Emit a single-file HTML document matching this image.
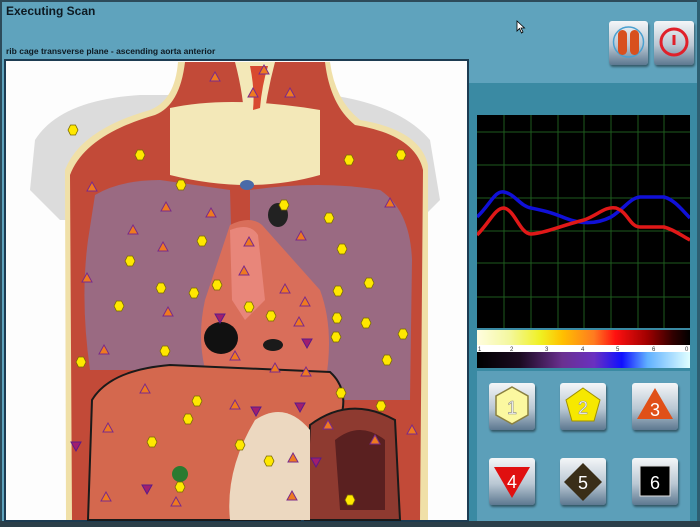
<!DOCTYPE html>
<html><head><style>
*{margin:0;padding:0;box-sizing:border-box}
body{width:700px;height:527px;overflow:hidden;background:#5fa3bd;font-family:"Liberation Sans",sans-serif;position:relative}
.t{position:absolute;font-weight:bold;color:#0d1a22}
.btn{position:absolute;border-radius:3px;background:linear-gradient(#f4f6f8,#b9c7d3 55%,#5d7890);box-shadow:1px 2px 2px rgba(0,0,0,.45)}
</style></head><body>
<div style="position:absolute;left:0;top:0;width:700px;height:2px;background:#2d4b5a"></div>
<div style="position:absolute;left:0;top:0;width:2px;height:527px;background:#2d4b5a"></div>
<div style="position:absolute;right:0;top:0;width:3px;height:527px;background:#2d5f72"></div>
<div style="position:absolute;left:0;top:521px;width:700px;height:6px;background:#2b3f49"></div>
<div class="t" style="left:6px;top:4px;font-size:12px">Executing Scan</div>
<div class="t" style="left:6px;top:46px;font-size:8.5px">rib cage transverse plane - ascending aorta anterior</div>
<div style="position:absolute;left:468px;top:83px;width:229px;height:438px;background:#3a8aa3"></div>
<div class="btn" style="left:609px;top:21px;width:39px;height:44px">
<svg width="39" height="44"><circle cx="19.5" cy="21" r="15" fill="none" stroke="#4aa0d0" stroke-width="1.5"/><rect x="9" y="9" width="9" height="25" rx="4.5" fill="#d8501e"/><rect x="21" y="9" width="9" height="25" rx="4.5" fill="#d8501e"/></svg></div>
<div class="btn" style="left:654px;top:21px;width:40px;height:44px">
<svg width="40" height="44"><circle cx="20" cy="21" r="13" fill="none" stroke="#e0202a" stroke-width="3"/><rect x="18.5" y="14" width="3" height="10" fill="#e0202a"/></svg></div>
<svg style="position:absolute;left:516px;top:20px" width="10" height="14"><path d="M1 1 L1 11 L3.5 8.5 L5.5 13 L7 12 L5 8 L8.5 8 Z" fill="#fff" stroke="#000" stroke-width=".8"/></svg>

<!-- image panel -->
<svg style="position:absolute;left:4px;top:59px" width="465" height="463" viewBox="4 59 465 463">
<rect x="4" y="59" width="465" height="463" fill="#1d3c52"/>
<rect x="6" y="61" width="461" height="459" fill="#fdfdfd"/>
<path d="M35 140 Q60 100 140 95 L330 95 Q400 105 430 140 L440 200 L420 220 L60 220 L30 190 Z" fill="#dcdcdc"/>
<path d="M65 170 Q80 130 150 110 Q175 100 178 62 L330 62 Q335 100 360 120 Q420 130 428 165 L428 520 L66 520 Z" fill="#f0e0a8"/>
<path d="M70 175 Q85 135 155 115 Q180 105 185 62 L325 62 Q330 105 355 125 Q415 135 423 170 L420 520 L72 520 Z" fill="#c24a38"/>
<path d="M170 108 Q230 95 320 110 L320 175 Q250 195 170 175 Z" fill="#f3e8b8"/>
<path d="M235 62 Q245 100 245 135 L262 135 Q265 100 275 62 Z" fill="#f3e8b8"/>
<path d="M250 66 Q255 90 253 110 L260 108 Q262 85 268 66Z" fill="#d84a30"/>
<path d="M95 195 Q120 180 160 180 L230 190 L235 370 L90 370 Q80 300 88 240 Z" fill="#9a6a82"/>
<path d="M250 190 Q320 180 380 190 Q410 210 412 260 L410 400 L300 400 L250 370 Z" fill="#9a6a82"/>
<path d="M230 225 Q250 215 262 225 L320 290 Q335 330 325 385 L210 385 Q195 345 205 300 Z" fill="#d96e5a"/>
<path d="M230 230 Q250 222 258 235 L265 300 L245 320 L232 300 Z" fill="#e8867a"/>
<ellipse cx="221" cy="338" rx="17" ry="16" fill="#111"/>
<ellipse cx="278" cy="215" rx="10" ry="12" fill="#222"/>
<ellipse cx="273" cy="345" rx="10" ry="6" fill="#1a1a1a"/>
<path d="M92 400 Q110 370 170 365 L330 372 Q350 390 340 420 L310 430 L300 520 L88 520 Z" fill="#d4684e" stroke="#1a1a1a" stroke-width="2"/>
<path d="M310 425 Q350 395 395 420 L400 520 L305 520 Z" fill="#8e3a30" stroke="#1a1a1a" stroke-width="2"/>
<path d="M335 440 Q360 420 385 440 L385 510 L340 510 Z" fill="#5a2020"/>
<path d="M255 420 Q285 400 310 430 L310 520 L230 520 Q225 470 255 420 Z" fill="#ecd8c0"/>
<circle cx="180" cy="474" r="8" fill="#2a7a30"/>
<ellipse cx="247" cy="185" rx="7" ry="5" fill="#4a6aa8"/>
<g fill="#ffe800" stroke="#7a6a00" stroke-width=".8">
<g id="h"><polygon points="-5,0 -2.5,-5 2.5,-5 5,0 2.5,5 -2.5,5" transform="translate(73,130)"/></g>
</g>
<g fill="#ffe800" stroke="#7a6a00" stroke-width=".8" id="hx"></g>
<g fill="#ee7a20" stroke="#7a2a8a" stroke-width="1" id="tu"></g>
<g fill="#a01e6e" stroke="#5a1a8a" stroke-width="1" id="td"></g>
</svg>

<!-- chart -->
<svg style="position:absolute;left:477px;top:115px" width="213" height="255" viewBox="477 115 213 255">
<rect x="477" y="115" width="213" height="213" fill="#000"/>
<g stroke="#1e5a1e" stroke-width="1">
<path d="M504 115V328M531 115V328M558 115V328M584 115V328M611 115V328M638 115V328M664 115V328M477 132H690M477 165H690M477 198H690M477 231H690M477 263H690M477 297H690"/>
</g>
<path d="M477 217 C490 205 495 190 504 192 C515 194 520 206 531 208 C545 211 550 212 565 218 C580 224 595 225 611 217 C625 208 630 198 640 197 L664 197 C675 200 682 210 690 218" fill="none" stroke="#1010d8" stroke-width="3.5"/>
<path d="M477 235 C490 222 495 208 504 208 C515 210 520 234 531 234 C545 233 560 226 584 220 C598 215 605 206 616 208 C628 212 630 227 640 227 L664 227 C675 230 682 236 690 240" fill="none" stroke="#e01818" stroke-width="3.5"/>
<defs>
<linearGradient id="g1" x1="0" x2="1"><stop offset="0" stop-color="#fffde0"/><stop offset=".15" stop-color="#f4f8a0"/><stop offset=".3" stop-color="#f0f020"/><stop offset=".4" stop-color="#ffc000"/><stop offset=".55" stop-color="#ff7a20"/><stop offset=".65" stop-color="#ff1010"/><stop offset=".8" stop-color="#a00000"/><stop offset=".92" stop-color="#300000"/><stop offset="1" stop-color="#000"/></linearGradient>
<linearGradient id="g2" x1="0" x2="1"><stop offset="0" stop-color="#000"/><stop offset=".2" stop-color="#1a0a20"/><stop offset=".4" stop-color="#6a3090"/><stop offset=".55" stop-color="#6a30c0"/><stop offset=".68" stop-color="#1010ff"/><stop offset=".8" stop-color="#60b0ff"/><stop offset="1" stop-color="#e0ffff"/></linearGradient>
</defs>
<rect x="477" y="330" width="213" height="15" fill="url(#g1)"/>
<rect x="477" y="345" width="213" height="7" fill="#fff"/>
<g font-size="6" fill="#333" font-family="Liberation Sans"><text x="478" y="351">1</text><text x="510" y="351">2</text><text x="545" y="351">3</text><text x="581" y="351">4</text><text x="616" y="351">5</text><text x="652" y="351">6</text><text x="685" y="351">0</text></g>
<rect x="477" y="352" width="213" height="16" fill="url(#g2)"/>
</svg>

<div style="position:absolute;left:477px;top:371px;width:213px;height:150px;background:#5c9fb9"></div>
<div class="btn" style="left:489px;top:383px;width:46px;height:47px"><svg width="46" height="47"><polygon points="23,4 39,13 39,32 23,41 7,32 7,13" fill="#fbf8a0" stroke="#8a8040" stroke-width="1.5"/><text x="23" y="31" font-size="18" text-anchor="middle" fill="#fff" stroke="#888" stroke-width=".6" font-family="Liberation Sans">1</text></svg></div>
<div class="btn" style="left:560px;top:383px;width:46px;height:47px"><svg width="46" height="47"><polygon points="23,5 40,17 34,38 12,38 6,17" fill="#f6e800" stroke="#a09000" stroke-width="1"/><text x="23" y="31" font-size="18" text-anchor="middle" fill="#fff" stroke="#999" stroke-width=".6" font-family="Liberation Sans">2</text></svg></div>
<div class="btn" style="left:632px;top:383px;width:46px;height:47px"><svg width="46" height="47"><polygon points="23,5 41,36 5,36" fill="#e05018"/><text x="23" y="33" font-size="18" text-anchor="middle" fill="#fff" font-family="Liberation Sans">3</text></svg></div>
<div class="btn" style="left:489px;top:458px;width:46px;height:47px"><svg width="46" height="47"><polygon points="5,9 41,9 23,40" fill="#e01010"/><text x="23" y="30" font-size="18" text-anchor="middle" fill="#fff" font-family="Liberation Sans">4</text></svg></div>
<div class="btn" style="left:560px;top:458px;width:46px;height:47px"><svg width="46" height="47"><polygon points="23,5 42,24 23,43 4,24" fill="#3a2e18"/><text x="23" y="31" font-size="18" text-anchor="middle" fill="#fff" font-family="Liberation Sans">5</text></svg></div>
<div class="btn" style="left:632px;top:458px;width:46px;height:47px"><svg width="46" height="47"><rect x="8" y="8" width="30" height="30" fill="#000" stroke="#ddd" stroke-width="1"/><text x="23" y="31" font-size="18" text-anchor="middle" fill="#fff" font-family="Liberation Sans">6</text></svg></div>

<script>
var ns="http://www.w3.org/2000/svg";
function add(id,pts,pts2){var g=document.getElementById(id);pts.forEach(function(p){var e=document.createElementNS(ns,"polygon");e.setAttribute("points",pts2);e.setAttribute("transform","translate("+p[0]+","+p[1]+")");g.appendChild(e);});}
add("hx",[[140,155],[349,160],[401,155],[181,185],[284,205],[329,218],[202,241],[130,261],[342,249],[369,283],[161,288],[194,293],[217,285],[119,306],[249,307],[271,316],[338,291],[337,318],[366,323],[403,334],[81,362],[165,351],[336,337],[387,360],[341,393],[381,406],[197,401],[188,419],[152,442],[240,445],[269,461],[180,487],[350,500]],"-5,0 -2.5,-5 2.5,-5 5,0 2.5,5 -2.5,5");
add("tu",[[215,77],[264,70],[253,93],[290,93],[92,187],[166,207],[211,213],[133,230],[163,247],[249,242],[301,236],[244,271],[285,289],[305,302],[87,278],[168,312],[104,350],[299,322],[235,405],[145,389],[108,428],[390,203],[412,430],[375,440],[293,458],[106,497],[176,502],[292,496],[328,425],[275,368],[306,372],[235,356]],"0,-5 5,4 -5,4");
add("td",[[220,318],[307,343],[256,411],[300,407],[76,446],[147,489],[316,462]],"-5,-4 5,-4 0,5");
</script>
</body></html>
